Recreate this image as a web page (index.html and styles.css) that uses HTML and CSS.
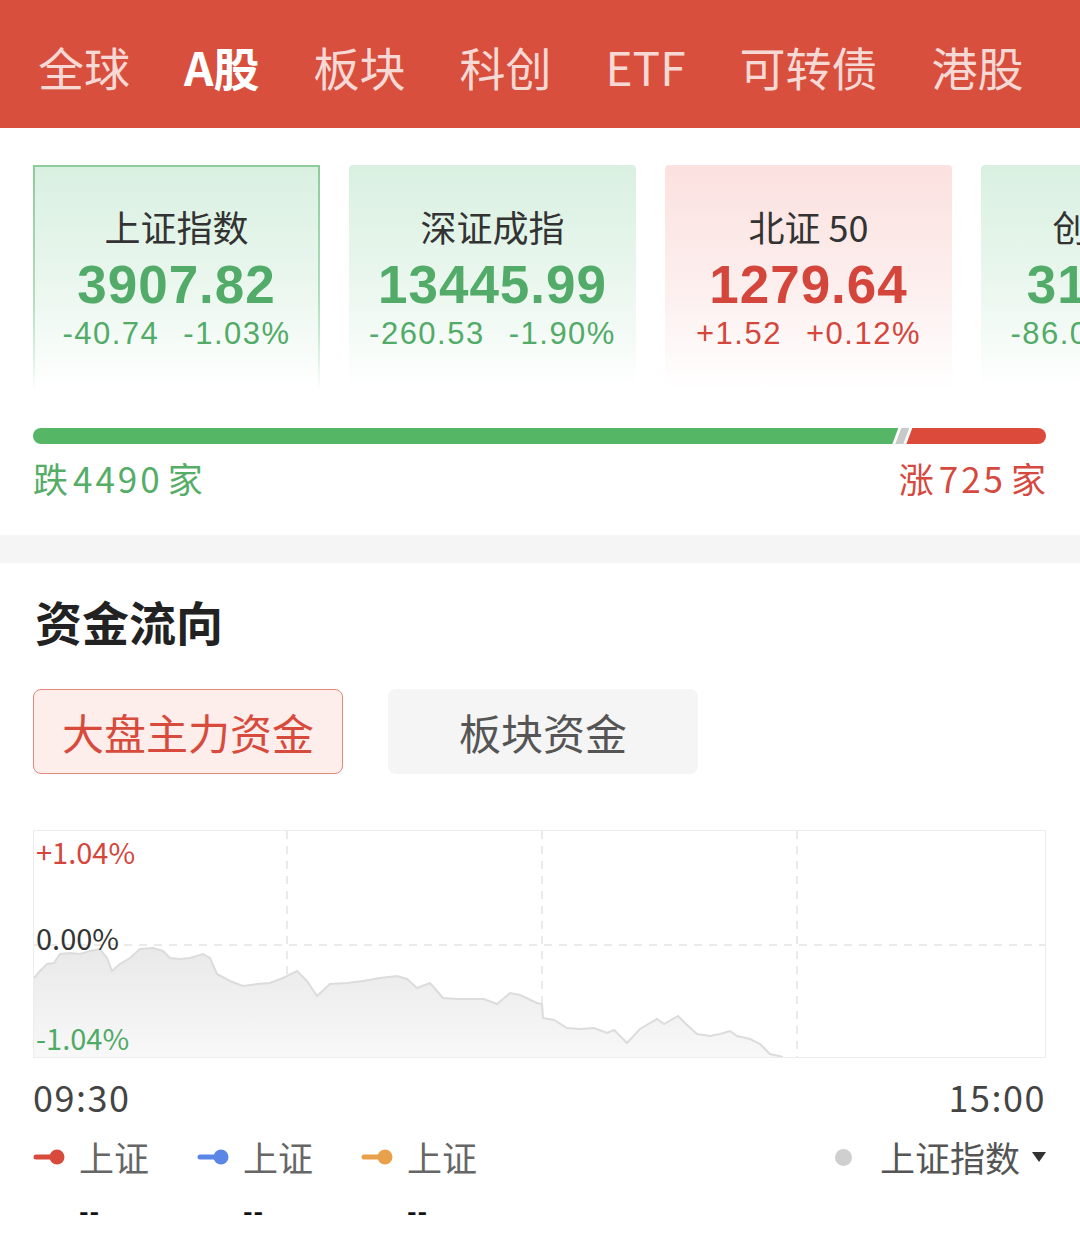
FILE: index.html
```html
<!DOCTYPE html>
<html lang="zh-CN">
<head>
  <meta charset="UTF-8">
  <meta name="viewport" content="width=device-width, initial-scale=1.0">
  <title>行情 - A股</title>
  <link rel="stylesheet" href="styles.css">
</head>
<body>
  <header class="tabs">
    <span class="tab">全球</span>
    <span class="tab active">A股</span>
    <span class="tab">板块</span>
    <span class="tab">科创</span>
    <span class="tab">ETF</span>
    <span class="tab">可转债</span>
    <span class="tab">港股</span>
  </header>

  <section class="overview">
    <div class="cards">
      <div class="card fall selected">
        <div class="card-name">上证指数</div>
        <div class="card-value">3907.82</div>
        <div class="card-change"><span>-40.74</span><span>-1.03%</span></div>
      </div>
      <div class="card fall">
        <div class="card-name">深证成指</div>
        <div class="card-value">13445.99</div>
        <div class="card-change"><span>-260.53</span><span>-1.90%</span></div>
      </div>
      <div class="card rise">
        <div class="card-name">北证 50</div>
        <div class="card-value">1279.64</div>
        <div class="card-change"><span>+1.52</span><span>+0.12%</span></div>
      </div>
      <div class="card fall">
        <div class="card-name">创业板指</div>
        <div class="card-value">3115.26</div>
        <div class="card-change"><span>-86.07</span><span>-2.69%</span></div>
      </div>
    </div>

    <div class="breadth">
      <div class="breadth-bar">
        <span class="seg down" style="flex-grow: 4490"></span>
        <span class="seg flat"></span>
        <span class="seg up" style="flex-grow: 725"></span>
      </div>
      <div class="breadth-labels">
        <span class="down-text">跌<span class="num">4490</span>家</span>
        <span class="up-text">涨<span class="num">725</span>家</span>
      </div>
    </div>
  </section>

  <div class="divider"></div>

  <section class="flow">
    <h2>资金流向</h2>
    <div class="switch">
      <button class="on">大盘主力资金</button>
      <button>板块资金</button>
    </div>

    <div class="chart">
      <svg class="chart-svg" viewBox="0 0 1011 226" preserveAspectRatio="none">
        <defs>
          <linearGradient id="area" x1="0" y1="0" x2="0" y2="1">
            <stop offset="0" stop-color="#e9e9ea"/>
            <stop offset="1" stop-color="#f8f8f8"/>
          </linearGradient>
        </defs>
        <g class="grid">
          <line x1="253" y1="0" x2="253" y2="226"/>
          <line x1="508" y1="0" x2="508" y2="226"/>
          <line x1="763" y1="0" x2="763" y2="226"/>
          <line x1="0" y1="114" x2="1011" y2="114"/>
        </g>
        <path class="area" d="M0,147 L6,140 L13,133 L20,132 L26,123 L36,122 L46,123 L56,120 L66,118 L73,127 L78,140 L86,133 L96,127 L106,118 L119,117 L129,120 L136,127 L146,128 L156,127 L169,123 L176,127 L183,143 L196,150 L209,155 L223,153 L236,152 L249,147 L263,140 L273,150 L283,165 L296,153 L313,152 L329,150 L346,147 L363,145 L373,148 L383,157 L396,152 L409,167 L423,168 L436,168 L450,168 L463,173 L476,162 L486,164 L503,172 L508,173 L509,187 L520,189 L533,197 L546,198 L560,197 L573,202 L580,199 L593,212 L606,198 L623,188 L630,193 L644,185 L652,193 L663,203 L676,205 L686,203 L696,200 L703,205 L716,208 L726,213 L736,223 L749,226 L0,226 Z"/>
        <polyline class="line" points="0,147 6,140 13,133 20,132 26,123 36,122 46,123 56,120 66,118 73,127 78,140 86,133 96,127 106,118 119,117 129,120 136,127 146,128 156,127 169,123 176,127 183,143 196,150 209,155 223,153 236,152 249,147 263,140 273,150 283,165 296,153 313,152 329,150 346,147 363,145 373,148 383,157 396,152 409,167 423,168 436,168 450,168 463,173 476,162 486,164 503,172 508,173 509,187 520,189 533,197 546,198 560,197 573,202 580,199 593,212 606,198 623,188 630,193 644,185 652,193 663,203 676,205 686,203 696,200 703,205 716,208 726,213 736,223 749,226"/>
      </svg>
      <span class="y-label top">+1.04%</span>
      <span class="y-label mid">0.00%</span>
      <span class="y-label bottom">-1.04%</span>
    </div>

    <div class="axis">
      <span>09:30</span>
      <span>15:00</span>
    </div>

    <div class="legend">
      <div class="legend-item">
        <div class="legend-name">
          <svg class="pin" viewBox="0 0 32 16"><line x1="3" y1="8" x2="24" y2="8" stroke="#d84a3c" stroke-width="5" stroke-linecap="round"/><circle cx="24" cy="8" r="7.5" fill="#d84a3c"/></svg>
          上证
        </div>
        <div class="legend-value">--</div>
      </div>
      <div class="legend-item">
        <div class="legend-name">
          <svg class="pin" viewBox="0 0 32 16"><line x1="3" y1="8" x2="24" y2="8" stroke="#5b86e8" stroke-width="5" stroke-linecap="round"/><circle cx="24" cy="8" r="7.5" fill="#5b86e8"/></svg>
          上证
        </div>
        <div class="legend-value">--</div>
      </div>
      <div class="legend-item">
        <div class="legend-name">
          <svg class="pin" viewBox="0 0 32 16"><line x1="3" y1="8" x2="24" y2="8" stroke="#e9a04a" stroke-width="5" stroke-linecap="round"/><circle cx="24" cy="8" r="7.5" fill="#e9a04a"/></svg>
          上证
        </div>
        <div class="legend-value">--</div>
      </div>
      <div class="legend-select">
        <span class="dot"></span>
        <span>上证指数</span>
        <span class="caret"></span>
      </div>
    </div>
  </section>
</body>
</html>
```

FILE: styles.css
```css
body {
  margin: 0;
  background: #fff;
  color: #333;
  font-family: "Noto Sans CJK SC", "Noto Sans", sans-serif;
  overflow-x: hidden;
}

/* top tabs */
.tabs {
  height: 128px;
  box-sizing: border-box;
  padding: 4px 0 0 38px;
  display: flex;
  align-items: center;
  gap: 54px;
  background: #d84f3e;
}
.tab {
  font-size: 46px;
  line-height: 1;
  color: rgba(255, 255, 255, 0.8);
}
.tab.active {
  color: #fff;
  font-weight: bold;
}

/* index cards */
.overview {
  padding: 37px 0;
}
.cards {
  display: flex;
  gap: 29px;
  padding-left: 33px;
  overflow: hidden;
}
.card {
  flex: none;
  width: 287px;
  height: 225px;
  box-sizing: border-box;
  padding-top: 36px;
  text-align: center;
  border-radius: 4px;
}
.card.fall {
  background: linear-gradient(#d9f0e1, #ebf7ef 55%, #fff);
  color: #52ab68;
}
.card.rise {
  background: linear-gradient(#fbe1df, #fcefee 55%, #fff);
  color: #d4463c;
}
.card.selected {
  border: 2px solid;
  border-bottom: 0;
  border-image: linear-gradient(#8ccb9b, #b3dec0 60%, rgba(255, 255, 255, 0)) 1;
  padding-top: 34px;
}
.card-name {
  font-size: 36px;
  line-height: 50px;
  color: #333;
}
.card-value {
  font-family: "Liberation Sans", Arial, sans-serif;
  font-weight: bold;
  font-size: 53px;
  line-height: 68px;
  letter-spacing: 1px;
}
.card-change {
  font-family: "Liberation Sans", Arial, sans-serif;
  font-size: 31px;
  line-height: 30px;
  letter-spacing: 1.5px;
}
.card-change span + span {
  margin-left: 24px;
}

/* rise / fall bar */
.breadth {
  margin-top: 38px;
  padding: 0 34px 0 33px;
}
.breadth-bar {
  display: flex;
  height: 16px;
}
.seg {
  display: block;
  height: 100%;
}
.seg.down {
  background: #55b665;
  border-radius: 8px 0 0 8px;
  clip-path: polygon(0 0, 100% 0, calc(100% - 6px) 100%, 0 100%);
}
.seg.flat {
  flex: none;
  width: 14px;
  margin-left: -3px;
  background: #c9c9c9;
  clip-path: polygon(6px 0, 100% 0, calc(100% - 6px) 100%, 0 100%);
}
.seg.up {
  margin-left: -3px;
  background: #dc4a3b;
  border-radius: 0 8px 8px 0;
  clip-path: polygon(6px 0, 100% 0, 100% 100%, 0 100%);
}
.breadth-labels {
  margin-top: 14px;
  display: flex;
  justify-content: space-between;
  font-size: 35px;
  line-height: 40px;
}
.breadth-labels .num {
  margin: 0 5px;
  letter-spacing: 3px;
}
.down-text {
  color: #55ad68;
}
.up-text {
  color: #d5493f;
}

.divider {
  height: 28px;
  background: #f5f5f6;
}

/* money flow */
.flow {
  padding: 32px 34px 0 33px;
}
.flow h2 {
  margin: 0 0 0 2px;
  font-size: 47px;
  line-height: 52px;
  font-weight: bold;
  color: #222;
}
.switch {
  margin-top: 42px;
  display: flex;
  gap: 45px;
}
.switch button {
  width: 310px;
  height: 85px;
  padding: 0;
  border: 1.5px solid transparent;
  border-radius: 8px;
  background: #f5f5f5;
  color: #555;
  font-family: inherit;
  font-size: 42px;
}
.switch button.on {
  background: #fdeeec;
  border-color: #e3887d;
  color: #d84a3c;
}

.chart {
  margin-top: 56px;
  position: relative;
  height: 228px;
  border: 1px solid #ececec;
  box-sizing: border-box;
}
.chart-svg {
  display: block;
  width: 100%;
  height: 100%;
}
.grid line {
  stroke: #e4e4e4;
  stroke-width: 1.5;
  stroke-dasharray: 8 7;
}
.area {
  fill: url(#area);
}
.line {
  fill: none;
  stroke: #dcdcdc;
  stroke-width: 2;
}
.y-label {
  position: absolute;
  left: 2px;
  font-size: 29px;
  line-height: 32px;
}
.y-label.top {
  top: 4px;
  color: #d4463c;
}
.y-label.mid {
  top: 90px;
  color: #333;
}
.y-label.bottom {
  top: 190px;
  color: #4faa66;
}

.axis {
  margin-top: 18px;
  display: flex;
  justify-content: space-between;
  font-size: 36px;
  line-height: 40px;
  letter-spacing: 1.5px;
  color: #444;
}

.legend {
  margin-top: 21px;
  display: flex;
  align-items: flex-start;
}
.legend-item {
  flex: none;
  width: 164px;
}
.legend-name {
  display: flex;
  align-items: center;
  gap: 14px;
  font-size: 35px;
  line-height: 40px;
  color: #666;
}
.pin {
  width: 32px;
  height: 16px;
}
.legend-value {
  margin-top: 21px;
  padding-left: 46px;
  font-size: 26px;
  line-height: 24px;
  font-weight: bold;
  letter-spacing: 1px;
  color: #111;
}
.legend-select {
  margin-left: auto;
  display: flex;
  align-items: center;
  font-size: 35px;
  line-height: 40px;
  color: #555;
}
.dot {
  width: 17px;
  height: 17px;
  border-radius: 50%;
  background: #cfcfcf;
  margin-right: 28px;
}
.caret {
  margin-left: 12px;
  width: 0;
  height: 0;
  border-left: 7px solid transparent;
  border-right: 7px solid transparent;
  border-top: 10px solid #333;
}
```
